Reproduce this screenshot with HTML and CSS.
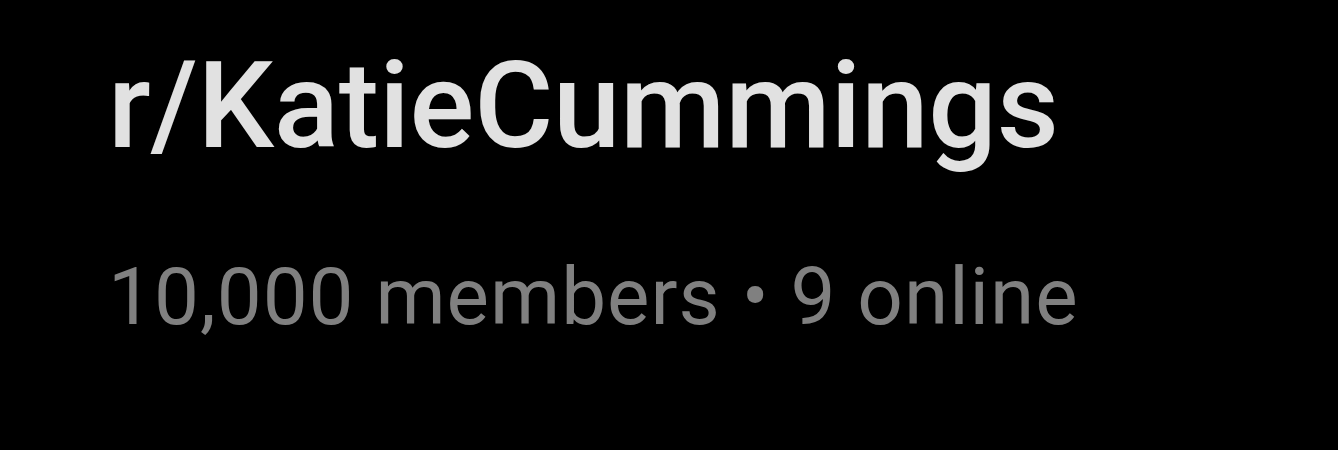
FILE: index.html
```html
<!DOCTYPE html>
<html>
<head>
<meta charset="utf-8">
<link rel="stylesheet" href="styles.css">
</head>
<body>
<main class="header">
  <h1 class="title">r/KatieCummings</h1>
  <p class="meta">10,000 members • 9 online</p>
</main>
</body>
</html>
```

FILE: styles.css
```css
html, body {
  margin: 0;
  padding: 0;
  background: #000;
  width: 1338px;
  height: 450px;
  overflow: hidden;
}
.header {
  display: flex;
  flex-direction: column;
  gap: 70px;
  padding: 34px 0 0 108px;
  font-family: Roboto, "Noto Sans", sans-serif;
}
.title {
  margin: 0;
  font-size: 121px;
  line-height: 145px;
  font-weight: 500;
  letter-spacing: -0.2px;
  color: #e1e1e1;
}
.meta {
  margin: 0;
  font-size: 80px;
  line-height: 96px;
  font-weight: 400;
  letter-spacing: 1px;
  color: #808080;
}
```
